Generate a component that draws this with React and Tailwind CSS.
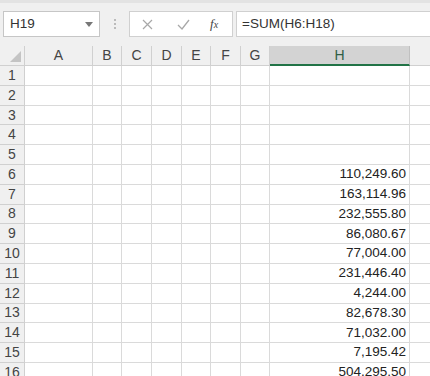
import React from "react";

const cols = [
  { k: "A", w: "w-[68px]" },
  { k: "B", w: "w-[29px]" },
  { k: "C", w: "w-[30px]" },
  { k: "D", w: "w-[30px]" },
  { k: "E", w: "w-[29px]" },
  { k: "F", w: "w-[30px]" },
  { k: "G", w: "w-[29px]" },
  { k: "H", w: "w-[140px]" },
];

const values = {
  6: "110,249.60",
  7: "163,114.96",
  8: "232,555.80",
  9: "86,080.67",
  10: "77,004.00",
  11: "231,446.40",
  12: "4,244.00",
  13: "82,678.30",
  14: "71,032.00",
  15: "7,195.42",
  16: "504,295.50",
};

export default function App() {
  const rows = Array.from({ length: 16 }, (_, i) => i + 1);
  return (
    <div className="w-[430px] h-[376px] overflow-hidden bg-white" style={{ fontFamily: '"Liberation Sans", Arial, sans-serif' }}>
      {/* toolbar */}
      <div className="h-[46px] bg-[#f0f0f0] border-t-[3px] border-[#e3e3e3] flex items-start pt-[8px]">
        <div className="ml-[3px] w-[97px] h-[26px] bg-white border border-[#c6c6c6] flex items-center pl-[6px] pr-[6px] text-[13.5px] text-[#333]">
          <span className="flex-1">H19</span>
          <svg width="8" height="5" viewBox="0 0 8 5"><path d="M0 0 L8 0 L4 5 Z" fill="#777" /></svg>
        </div>
        <div className="w-[29px] h-[26px] flex flex-col items-center justify-center gap-[2px]">
          <span className="w-[2px] h-[2px] bg-[#aaa] rounded-full" />
          <span className="w-[2px] h-[2px] bg-[#aaa] rounded-full" />
          <span className="w-[2px] h-[2px] bg-[#aaa] rounded-full" />
        </div>
        <div className="w-[104px] h-[26px] bg-white border border-[#d0d0d0] flex items-center">
          <svg className="ml-[12px]" width="11" height="11" viewBox="0 0 11 11"><path d="M1 1 L10 10 M10 1 L1 10" stroke="#a8a8a8" strokeWidth="1.2" /></svg>
          <svg className="ml-[24px]" width="13" height="11" viewBox="0 0 13 11"><path d="M1 6 L5 10 L12 1" stroke="#a8a8a8" strokeWidth="1.3" fill="none" /></svg>
          <span className="ml-[20px] text-[13px] text-[#444] italic" style={{ fontFamily: '"Liberation Serif", serif' }}>f<span className="text-[10px]">x</span></span>
        </div>
        <div className="ml-[3px] flex-1 h-[26px] bg-white border border-[#d0d0d0] border-r-0 flex items-center pl-[5px] text-[13.5px] text-[#333]">
          =SUM(H6:H18)
        </div>
      </div>
      {/* header row */}
      <div className="flex h-[20px] bg-[#f0f0f0] text-[14px] text-[#444]">
        <div className="w-[25px] h-full border-r border-b border-[#d0d0d0] relative">
          <svg className="absolute right-[3px] bottom-[3px]" width="11" height="11" viewBox="0 0 11 11"><path d="M11 0 L11 11 L0 11 Z" fill="#c4c4c4" /></svg>
        </div>
        {cols.map((c) => (
          <div
            key={c.k}
            className={`${c.w} h-full flex items-center justify-center border-r ${c.k === "H" ? "bg-[#d3d3d3] border-b-2 border-b-[#217346] text-[#2f5f45] border-r-[#c0c0c0]" : "border-b border-[#d0d0d0]"}`}
          >
            {c.k}
          </div>
        ))}
        <div className="flex-1 h-full border-b border-[#d0d0d0]" />
      </div>
      {/* rows */}
      {rows.map((r) => (
        <div key={r} className="flex h-[19.8px] text-[13.5px]">
          <div className="w-[25px] h-full bg-[#f0f0f0] border-r border-b border-[#d0d0d0] flex items-center justify-center text-[#444] text-[14px]">
            {r}
          </div>
          {cols.map((c) => (
            <div
              key={c.k}
              className={`${c.w} h-full border-r border-b border-[#dadada] flex items-center justify-end pr-[3px] text-[#222] ${c.k === "H" ? "bg-white" : ""}`}
            >
              {c.k === "H" ? values[r] || "" : ""}
            </div>
          ))}
          <div className="flex-1 h-full border-b border-[#dadada]" />
        </div>
      ))}
    </div>
  );
}
